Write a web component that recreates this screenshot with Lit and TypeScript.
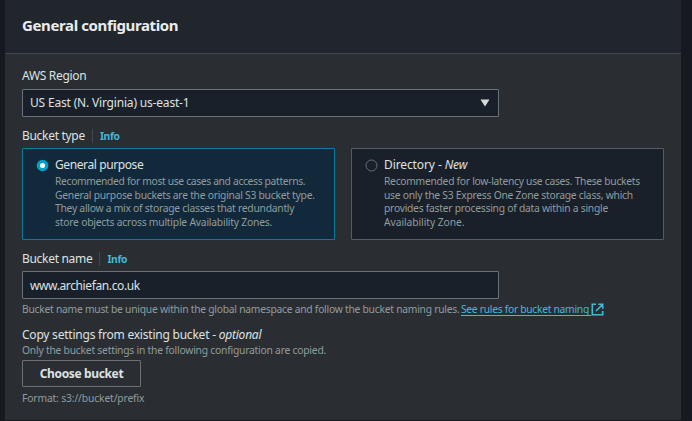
import { LitElement, html, css } from "lit";
import { customElement } from "lit/decorators.js";

@customElement("app-root")
export class AppRoot extends LitElement {
  static styles = css`
    :host { display: block; width: 692px; height: 421px; box-sizing: border-box; overflow: hidden;
      padding: 0 11px 1px 5px; background: #16191f; color: #dde2e2;
      font-family: "Noto Sans", sans-serif; font-size: 12px; line-height: 16px; white-space: nowrap; }
    * { box-sizing: border-box; }
    .panel { height: 420px; background: #2a2e33; }
    .header { height: 54px; padding: 14px 17px 0; background: #21252c; border-bottom: 1px solid #414750; }
    h2 { margin: 0; font-size: 15px; line-height: 22px; font-weight: 700; color: #eaeded; letter-spacing: -0.38px; }
    .body { padding: 14px 17px 0; display: flex; flex-direction: column; align-items: flex-start; }
    .label { height: 16px; letter-spacing: -0.3px; display: flex; align-items: center; }
    .info { margin-left: 7px; padding-left: 7px; border-left: 1px solid #414750; height: 14px; line-height: 14px;
      color: #44b9d6; font-weight: 700; font-size: 10.3px; letter-spacing: -0.35px; }
    .field { width: 477px; height: 28px; padding: 0 8px 0 7px; background: #1a2029; border: 1px solid #687078; border-radius: 1px;
      display: flex; align-items: center; justify-content: space-between; letter-spacing: -0.18px; }
    .region { margin-top: 5px; margin-bottom: 11px; }
    .name { margin-top: 4px; height: 28px; padding-top: 1px; letter-spacing: -0.38px; }
    .cards { margin: 4px 0 11px; display: grid; grid-template-columns: 313px 313px; gap: 16px; }
    .card { height: 92px; padding: 8px 0 0 13px; display: flex; gap: 6px; border: 1px solid #545b64; border-radius: 1px; background: #1a2029; }
    .card.on { background: #12293b; border-color: #097c99; }
    .radio { margin-top: 2px; width: 13px; height: 13px; flex: none; }
    .title { letter-spacing: -0.4px; }
    .title.wide { letter-spacing: -0.1px; }
    .muted { color: #8f9d9e; font-size: 10.3px; line-height: 13.5px; letter-spacing: -0.25px; }
    .desc { margin-top: 2px; }
    .tight { letter-spacing: -0.34px; }
    .snug { letter-spacing: -0.28px; }
    .loose { letter-spacing: -0.21px; }
    .open { letter-spacing: -0.07px; }
    .hint { margin-top: 4px; height: 14px; display: flex; align-items: center; letter-spacing: -0.25px; }
    .link { margin-left: 1.5px; color: #44b9d6; display: flex; align-items: center; letter-spacing: -0.29px; }
    .link u { text-underline-offset: 2px; white-space: pre; }
    .link svg { margin-bottom: 1px; }
    .copy { margin-top: 10px; letter-spacing: -0.22px; }
    .note { margin-top: 1px; letter-spacing: -0.22px; }
    .btn { margin-top: 2px; width: 119px; height: 27px; display: flex; align-items: center; justify-content: center;
      border: 1px solid #687078; border-radius: 1px; font-weight: 700; letter-spacing: -0.36px; padding-top: 1px; }
    .format { margin-top: 5px; letter-spacing: -0.14px; }
  `;

  render() {
    return html`
      <section class="panel">
        <div class="header"><h2><span>General configuration</span></h2></div>
        <div class="body">
          <div class="label"><span>AWS Region</span></div>
          <div class="field region"><span>US East (N. Virginia) us-east-1</span>
            <svg width="10" height="8" viewBox="0 0 10 8"><path d="M.5.5h9L5 7.5z" fill="#d5dbdb"/></svg></div>
          <div class="label"><span>Bucket type</span><span class="info">Info</span></div>
          <div class="cards">
            <div class="card on">
              <svg class="radio" viewBox="0 0 13 13"><circle cx="6.5" cy="6.5" r="5.8" fill="#00a1c9"/><circle cx="6.5" cy="6.5" r="2.5" fill="#fff"/></svg>
              <div><div class="title"><span>General purpose</span></div>
                <div class="muted desc"><div class="tight">Recommended for most use cases and access patterns.</div><div>General purpose buckets are the original S3 bucket type.</div><div>They allow a mix of storage classes that redundantly</div><div class="loose">store objects across multiple Availability Zones.</div></div></div>
            </div>
            <div class="card">
              <svg class="radio" viewBox="0 0 13 13"><circle cx="6.5" cy="6.5" r="5.5" fill="none" stroke="#687078"/></svg>
              <div><div class="title wide"><span>Directory - <i>New</i></span></div>
                <div class="muted desc"><div class="snug">Recommended for low-latency use cases. These buckets</div><div>use only the S3 Express One Zone storage class, which</div><div>provides faster processing of data within a single</div><div class="open">Availability Zone.</div></div></div>
            </div>
          </div>
          <div class="label"><span>Bucket name</span><span class="info">Info</span></div>
          <div class="field name"><span>www.archiefan.co.uk</span></div>
          <div class="muted hint"><span>Bucket name must be unique within the global namespace and follow the bucket naming rules.</span>
            <span class="link"><u>See rules for bucket naming </u>
              <svg width="13" height="13" viewBox="0 0 13 13" fill="none" stroke="#44b9d6" stroke-width="1.6"><path d="M5 1.3H1.3v10.4h10.4V8M7.2 1.3h4.5v4.5M11.5 1.5L5 8"/></svg></span></div>
          <div class="label copy"><span>Copy settings from existing bucket - <i>optional</i></span></div>
          <div class="muted note"><span>Only the bucket settings in the following configuration are copied.</span></div>
          <div class="btn"><span>Choose bucket</span></div>
          <div class="muted format"><span>Format: s3://bucket/prefix</span></div>
        </div>
      </section>`;
  }
}
